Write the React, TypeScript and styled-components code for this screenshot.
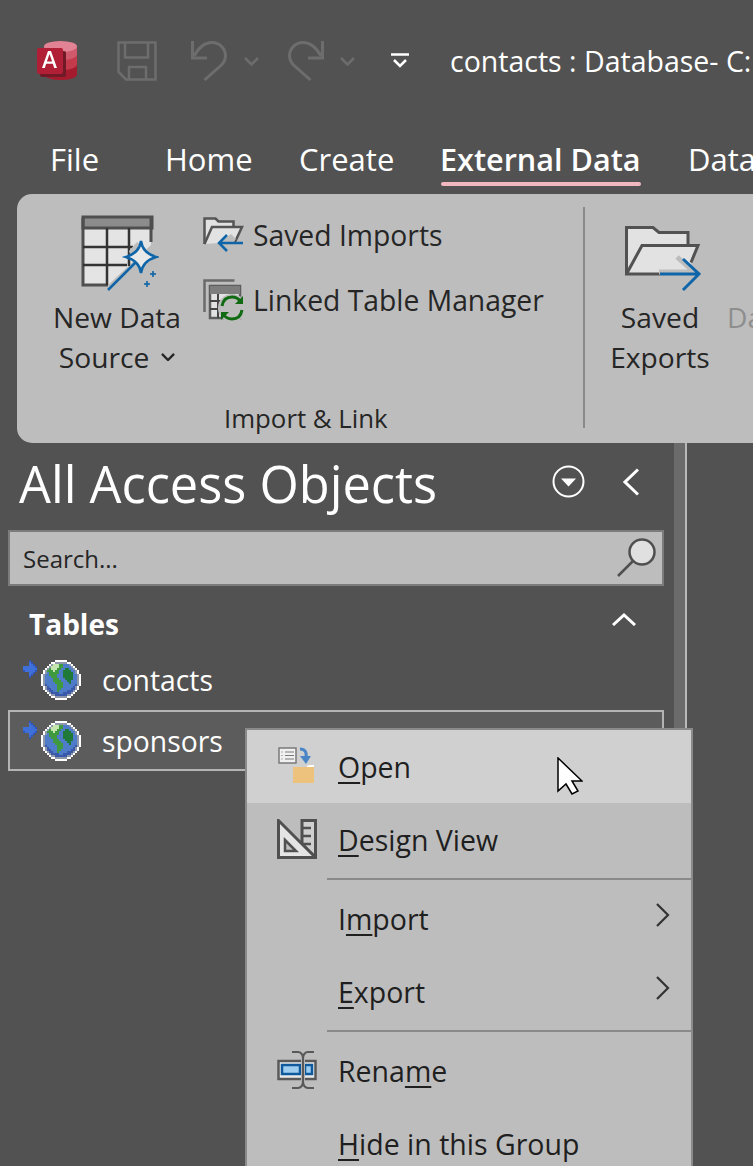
import React from 'react'
import styled, { createGlobalStyle } from 'styled-components'

const GlobalStyle = createGlobalStyle`
  *, *::before, *::after {
    box-sizing: border-box;
  }
  html, body {
    background: #525252;
    margin: 0;
    padding: 0;
  }
  body {
    font-family: 'Open Sans', 'Noto Sans', 'Liberation Sans', sans-serif;
  }
`

const Window = styled.div`
  background: #525252;
  display: flex;
  flex-direction: column;
  height: 1166px;
  overflow: hidden;
  position: relative;
  width: 753px;
`

const TitleBar = styled.div`
  align-items: center;
  display: flex;
  flex-shrink: 0;
  height: 122px;
  padding-left: 36px;
  white-space: nowrap;
`

const QuickIcon = styled.span<{ $gap: number }>`
  display: flex;
  flex-shrink: 0;
  margin-left: ${({ $gap }) => $gap}px;
`

const TitleText = styled.span`
  color: #fff;
  font-size: 28.5px;
  margin-left: 41px;
`

const TabBar = styled.div`
  display: flex;
  flex-shrink: 0;
  height: 72px;
  padding-left: 50px;
`

const Tab = styled.div<{ $width: number; $active?: boolean }>`
  color: #fff;
  flex-shrink: 0;
  font-size: ${({ $active }) => ($active ? 30.6 : 31)}px;
  font-weight: ${({ $active }) => ($active ? 600 : 400)};
  height: 64px;
  line-height: 38px;
  padding-top: 18px;
  position: relative;
  white-space: nowrap;
  width: ${({ $width }) => $width}px;
`

const TabLine = styled.span`
  background: #f2b8c0;
  border-radius: 2px;
  bottom: 0;
  height: 4px;
  left: 1px;
  position: absolute;
  width: 200px;
`

const Ribbon = styled.div`
  background: #bdbdbd;
  border-radius: 15px 0 0 15px;
  color: #262626;
  display: flex;
  flex-shrink: 0;
  height: 249px;
  margin-left: 17px;
  width: 770px;
`

const Group = styled.div`
  display: flex;
  flex-direction: column;
  flex-shrink: 0;
  height: 100%;
  width: 566px;
`

const GroupBody = styled.div`
  display: flex;
  flex: 1;
  padding: 21px 0 0 24px;
`

const BigButton = styled.div<{ $width: number }>`
  align-items: center;
  display: flex;
  flex-direction: column;
  flex-shrink: 0;
  font-size: 28.2px;
  line-height: 40px;
  white-space: nowrap;
  width: ${({ $width }) => $width}px;
`

const BigIcon = styled.div<{ $top?: number; $left: number }>`
  display: flex;
  height: 82px;
  justify-content: center;
  padding-left: ${({ $left }) => $left}px;
  padding-top: ${({ $top }) => $top ?? 0}px;
  width: 100%;
`

const ButtonLine = styled.span`
  align-items: center;
  display: flex;
  gap: 12px;
`

const SmallList = styled.div`
  display: flex;
  flex-direction: column;
  gap: 25px;
  padding-left: 10px;
`

const SmallItem = styled.div`
  align-items: center;
  display: flex;
  font-size: 28.3px;
  gap: 8px;
  height: 40px;
  white-space: nowrap;
`

const GroupLabel = styled.div`
  font-size: 25.8px;
  height: 48px;
  line-height: 46px;
  padding-left: 207px;
  white-space: nowrap;
`

const GroupRule = styled.div`
  align-self: center;
  background: #8a8a8a;
  flex-shrink: 0;
  height: 221px;
  margin-top: -2px;
  width: 2px;
`

const SecondGroup = styled.div`
  display: flex;
  padding: 21px 0 0 10px;
`

const DisabledLabel = styled.div`
  color: #8e8e8e;
  font-size: 28.2px;
  line-height: 40px;
  margin-top: 82px;
  padding-left: 2px;
`

const Body = styled.div`
  display: flex;
  flex: 1;
  min-height: 0;
`

const NavPane = styled.div`
  flex-shrink: 0;
  padding-left: 8px;
  width: 674px;
`

const NavHeader = styled.div`
  align-items: center;
  color: #fff;
  display: flex;
  height: 87px;
  padding: 0 35px 6px 11px;
`

const NavTitle = styled.div`
  flex: 1;
  font-size: 50.5px;
  white-space: nowrap;
`

const NavControls = styled.div`
  align-items: center;
  display: flex;
  gap: 38px;
  margin-bottom: 4px;
`

const SearchBox = styled.div`
  align-items: center;
  background: #bdbdbd;
  border: 2px solid #7c7c7c;
  color: #262626;
  display: flex;
  font-size: 24px;
  height: 56px;
  justify-content: space-between;
  padding: 0 6px 0 13px;
  width: 656px;
`

const SectionHeader = styled.div`
  align-items: center;
  color: #fff;
  display: flex;
  font-size: 28px;
  font-weight: 700;
  height: 63px;
  justify-content: space-between;
  padding: 13px 28px 0 21px;
  width: 656px;
`

const ObjectRow = styled.div<{ $selected?: boolean }>`
  align-items: center;
  background: ${({ $selected }) => ($selected ? '#5c5c5c' : 'transparent')};
  border: 2px solid ${({ $selected }) => ($selected ? '#b4b4b4' : 'transparent')};
  color: #fff;
  display: flex;
  font-size: 28.3px;
  gap: 21px;
  height: 61px;
  padding-left: 13px;
  width: 656px;
`

const ScrollStrip = styled.div`
  background: #6b6b6b;
  border-right: 2px solid #b8b8b8;
  flex-shrink: 0;
  width: 13px;
`

const Menu = styled.div`
  background: #bdbdbd;
  border-left: 2px solid #8a8a8a;
  border-right: 2px solid #8a8a8a;
  border-top: 2px solid #8a8a8a;
  color: #1f1f1f;
  display: flex;
  flex-direction: column;
  left: 245px;
  position: absolute;
  top: 728px;
  width: 448px;
`

const MenuRow = styled.div<{ $hover?: boolean }>`
  align-items: center;
  background: ${({ $hover }) => ($hover ? '#d0d0d0' : 'transparent')};
  display: flex;
  flex-shrink: 0;
  font-size: 28.5px;
  height: 73px;
  padding-right: 21px;
  white-space: nowrap;
`

const MenuIcon = styled.span`
  display: flex;
  flex-shrink: 0;
  justify-content: center;
  margin-top: -2px;
  padding-left: 9px;
  width: 91px;
`

const MenuLabel = styled.span`
  flex: 1;
`

const SubmenuArrow = styled.svg`
  margin-top: -8px;
`

const Key = styled.span`
  text-decoration: underline;
  text-decoration-thickness: 2px;
  text-underline-offset: 4px;
`

const MenuSeparator = styled.div`
  align-items: center;
  display: flex;
  flex-shrink: 0;
  height: 6px;
  padding-left: 80px;

  &::after {
    background: #8a8a8a;
    content: '';
    display: block;
    height: 2px;
    width: 100%;
  }
`

const Cursor = styled.svg`
  left: 557px;
  position: absolute;
  top: 757px;
`

const TableChevron = styled.svg`
  margin-top: -10px;
`

const PIXEL_COLORS: Record<string, string> = {
  W: '#ffffff',
  n: '#8f97ab',
  B: '#4f7cc9',
  D: '#3958a8',
  G: '#3f9a3f',
  L: '#c4e6ae',
  K: '#1f7a3a',
  A: '#3f6fd8',
  E: '#2f55b8',
}

const GLOBE = [
  '.......WWWWWW.......',
  '.....WWnnnnnnWW.....',
  '....WnLLLGGBBBnW....',
  '...WnLLLLGGBBBBnW...',
  '..WnGLLLGGBBKKBBnW..',
  '.WnGGGLGGBBKKKKBBnW.',
  '.WnBGGGGGBBKKKKKBnW.',
  'WnBBGGGGBBBKKKKKBBnW',
  'WnBBBGGGBBBKKKKKBBnW',
  'WnBBBBGGGBBBKKKKBBnW',
  'WnBBBBGGGGBBBKKBBBnW',
  'WnBBBBBGGGGBBBKBBBnW',
  'WnDBBBBBGGGBBBBBBDnW',
  '.WnDBBBBGGGBBBBBDnW.',
  '.WnDDBBBGGBBBBBDDnW.',
  '..WnDDBBGBBBBDDDnW..',
  '...WnDDDDBBDDDDnW...',
  '....WnnDDDDDDnnW....',
  '.....WWnnnnnnWW.....',
  '.......WWWWWW.......',
]

const LINK_ARROW = [
  '...E...',
  '...AE..',
  '...AAE.',
  'AAAAAAE',
  'AAAAAAA',
  'EAAAAAE',
  '...AAE.',
  '...AE..',
  '...E...',
]

const PixelArt: React.FC<{ rows: string[]; x: number; y: number }> = ({ rows, x, y }) => (
  <g shapeRendering="crispEdges">
    {rows.flatMap((row, r) =>
      row.split('').map((c, i) =>
        c === '.' ? null : (
          <rect key={`${r}-${i}`} x={x + i * 2} y={y + r * 2} width="2" height="2" fill={PIXEL_COLORS[c]} />
        ),
      ),
    )}
  </g>
)

const LinkedGlobe = () => (
  <svg width="58" height="40" viewBox="0 0 58 40">
    <PixelArt rows={LINK_ARROW} x={0} y={0} />
    <PixelArt rows={GLOBE} x={18} y={0} />
  </svg>
)

const AccessLogo = () => (
  <svg width="42" height="42" viewBox="0 0 42 42">
    <path d="M8 6h33v28c0 4-8 6-16 6s-17-2-17-6z" fill="#a41b2e" />
    <path d="M8 6h33v18c0 4-8 6-16 6S8 28 8 24z" fill="#c23a4c" />
    <path d="M8 6h33v8c0 4-8 6-16 6S8 18 8 14z" fill="#d05a6c" />
    <ellipse cx="24.500" cy="6.500" rx="16.500" ry="5.500" fill="#e28395" />
    <rect x="4" y="11" width="26" height="26" rx="2" fill="#6f1a26" />
    <rect x="1" y="8" width="26" height="26" rx="2" fill="#b01f35" />
    <path d="M6 28l6-17h3l6 17h-2.800l-1.400-4.200h-6.600L8.800 28zm4.900-6.400h5.200L13.500 14z" fill="#fff" />
  </svg>
)

const SaveIcon = () => (
  <svg width="40" height="40" viewBox="0 0 40 40" fill="none" stroke="#6d6d6d" strokeWidth="2.500">
    <path d="M1.500 1.500h37v37H9l-7.500-7.500z" />
    <path d="M8 1.500v15h23v-15M12 38.500V26h17v12.500" />
  </svg>
)

const TurnArrow: React.FC<{ flip?: boolean }> = ({ flip }) => (
  <svg width="36" height="40" viewBox="0 0 36 40" fill="none" stroke="#6d6d6d" strokeWidth="3">
    <g transform={flip ? 'translate(36 0) scale(-1 1)' : undefined}>
      <path d="M1.500 0V17H16" />
      <path d="M3 15C8 6 15 1.500 21 1.500c8 0 13.500 6.500 13.500 13.500 0 4-1.500 6-3.500 8.500L13.500 39" />
    </g>
  </svg>
)

const SmallChevron: React.FC<{ color?: string; size?: number }> = ({ color = '#6d6d6d', size = 15 }) => (
  <svg width={size} height={(size * 9) / 15} viewBox="0 0 15 9" fill="none" stroke={color} strokeWidth="2.500">
    <path d="M1 1l6.500 6.500L14 1" />
  </svg>
)

const CustomizeIcon = () => (
  <svg width="18" height="16" viewBox="0 0 18 16" fill="none" stroke="#fff" strokeWidth="2.500">
    <path d="M0 1.500h18" />
    <path d="M3 7l6 6 6-6" />
  </svg>
)

const NewDataIcon = () => (
  <svg width="78" height="78" viewBox="0 0 78 78">
    <path d="M2 3.500H70V30L27 70H2z" fill="#e4e4e4" />
    <rect x="2" y="2" width="69" height="11" fill="#8c8c8c" stroke="#4f4f4f" strokeWidth="3" />
    <path d="M2 3v67h25M70 3v24" fill="none" stroke="#4f4f4f" strokeWidth="3" />
    <path d="M26 13v57M48 13v38M2 32h50M2 50h44" stroke="#333" strokeWidth="2.500" fill="none" />
    <path d="M28 72l24-24-4-12 8-9 20 18-30 18-14 11z" fill="#bdbdbd" />
    <path d="M27 75l31-31" stroke="#0f65a8" strokeWidth="2.500" fill="none" />
    <path d="M60 26c1 8 5 13 15 16-10 3-14 8-15 16-1-8-5-13-15-16 10-3 14-8 15-16z" fill="#e9e9e9" stroke="#0f65a8" strokeWidth="2.500" />
    <path d="M72 56c0 2 1 3 3 3-2 0-3 1-3 3 0-2-1-3-3-3 2 0 3-1 3-3zM66 66c0 2 1 3 3 3-2 0-3 1-3 3 0-2-1-3-3-3 2 0 3-1 3-3z" fill="#0f65a8" stroke="#0f65a8" />
  </svg>
)

const SavedImportsIcon = () => (
  <svg width="42" height="36" viewBox="0 0 42 36">
    <path d="M1.500 27V1.500h11l3 3h15v5" fill="#e2e2e2" stroke="#555" strokeWidth="2.500" />
    <path d="M1.500 27L9 10h30l-7 15" fill="#e2e2e2" stroke="#555" strokeWidth="2.500" />
    <path d="M16 26l12-9 5 5-6 7z" fill="#bdbdbd" />
    <path d="M40 26H16M24 18l-8 8 8 8" fill="none" stroke="#0f65a8" strokeWidth="2.500" />
  </svg>
)

const LinkedTableIcon = () => (
  <svg width="42" height="42" viewBox="0 0 42 42">
    <path d="M1.500 33V1.500h30" fill="none" stroke="#6a6a6a" strokeWidth="2.500" />
    <rect x="7" y="7" width="30" height="32" fill="#e2e2e2" stroke="#5d5d5d" strokeWidth="2.500" />
    <rect x="7" y="7" width="30" height="8" fill="#7d7d7d" />
    <path d="M7 22h16M7 30h16M15 15v24" stroke="#444" strokeWidth="2" />
    <circle cx="29" cy="29" r="14" fill="#bdbdbd" />
    <path d="M19 27c1-6 5-9 10-9 4 0 7 2 9 5M39 31c-1 6-5 9-10 9-4 0-7-2-9-5" fill="none" stroke="#0f6a12" strokeWidth="3" />
    <path d="M40 17v8h-8zM18 41v-8h8z" fill="#0f6a12" />
  </svg>
)

const SavedExportsIcon = () => (
  <svg width="76" height="66" viewBox="0 0 76 66">
    <path d="M1.500 48V1.500H28l6 5h29V20" fill="#e2e2e2" stroke="#525252" strokeWidth="3" />
    <path d="M1.500 48L17 19.500h56L62 48z" fill="#e2e2e2" />
    <path d="M35 48H1.500L17 19.500h56l-7 17" fill="none" stroke="#525252" strokeWidth="3" />
    <path d="M52 31l17 15H34" fill="none" stroke="#bdbdbd" strokeWidth="5" />
    <path d="M35 48h39M58 33l16 15-16 16" fill="none" stroke="#0f65a8" strokeWidth="3" />
  </svg>
)

const PaneMenuIcon = () => (
  <svg width="33" height="33" viewBox="0 0 33 33">
    <circle cx="16.500" cy="16.500" r="15" fill="none" stroke="#fff" strokeWidth="2" />
    <path d="M9 13.500h15l-7.500 8z" fill="#fff" />
  </svg>
)

const CollapseIcon = () => (
  <svg width="16" height="28" viewBox="0 0 16 28" fill="none" stroke="#fff" strokeWidth="3">
    <path d="M15 1.500L2 14l13 12.500" />
  </svg>
)

const SearchIcon = () => (
  <svg width="40" height="40" viewBox="0 0 40 40">
    <circle cx="26" cy="14" r="12.500" fill="#e0e0e0" stroke="#4f4f4f" strokeWidth="2.500" />
    <path d="M17 23L2 38" stroke="#4f4f4f" strokeWidth="2.500" />
  </svg>
)

const OpenIcon = () => (
  <svg width="38" height="38" viewBox="0 0 38 38">
    <rect x="1" y="1" width="17" height="15" fill="#f0f0f0" stroke="#7a7a7a" strokeWidth="1.500" />
    <path d="M7 5h9M7 8.500h9M7 12h9M3.500 5h1M3.500 8.500h1M3.500 12h1" stroke="#7a7a7a" strokeWidth="1" />
    <path d="M22 2c5 0 7 3 6 9" fill="none" stroke="#4a86c5" strokeWidth="3" />
    <path d="M22 9l6 8 5-8z" fill="#4a86c5" />
    <path d="M15 20h14l3-2h4v18H15z" fill="#ecc27c" />
    <path d="M29 19l2-1h5v2h-7z" fill="#fff" />
  </svg>
)

const DesignIcon = () => (
  <svg width="40" height="40" viewBox="0 0 40 40">
    <path d="M25 1.500h13.500v37L25 25z" fill="#cfcfcf" stroke="#505050" strokeWidth="3" />
    <path d="M1.500 1.500l37 37h-37z" fill="#e4e4e4" stroke="#505050" strokeWidth="3" />
    <path d="M26 9h8M26 17h8M26 25h8" stroke="#505050" strokeWidth="2.500" />
    <path d="M8 21l11 11H8z" fill="#bdbdbd" stroke="#505050" strokeWidth="2.500" />
  </svg>
)

const RenameIcon = () => (
  <svg width="40" height="40" viewBox="0 0 40 40">
    <rect x="1.500" y="11" width="37" height="18" fill="#eaeaea" stroke="#595959" strokeWidth="2.500" />
    <rect x="5" y="15" width="18" height="9" fill="#9fcdf0" stroke="#0f5a9c" strokeWidth="2.500" />
    <rect x="28" y="15" width="7" height="9" fill="#9fcdf0" stroke="#0f5a9c" strokeWidth="2.500" />
    <rect x="24" y="8" width="4" height="26" fill="#bdbdbd" />
    <path d="M15 2h6c3 0 5 3 5 6v24c0 3-2 6-5 6h-6M37 2h-6c-3 0-5 3-5 6v24c0 3 2 6 5 6h6" fill="none" stroke="#595959" strokeWidth="2.200" />
  </svg>
)

const App: React.FC = () => (
  <>
    <GlobalStyle />
    <Window>
      <TitleBar>
        <AccessLogo />
        <QuickIcon $gap={39}><SaveIcon /></QuickIcon>
        <QuickIcon $gap={34}><TurnArrow /></QuickIcon>
        <QuickIcon $gap={17}><SmallChevron /></QuickIcon>
        <QuickIcon $gap={29}><TurnArrow flip /></QuickIcon>
        <QuickIcon $gap={16}><SmallChevron /></QuickIcon>
        <QuickIcon $gap={36}><CustomizeIcon /></QuickIcon>
        <TitleText>contacts : Database- C:</TitleText>
      </TitleBar>
      <TabBar>
        <Tab $width={115}>File</Tab>
        <Tab $width={134}>Home</Tab>
        <Tab $width={141}>Create</Tab>
        <Tab $width={248} $active>External Data<TabLine /></Tab>
        <Tab $width={100}>Database</Tab>
      </TabBar>
      <Ribbon>
        <Group>
          <GroupBody>
            <BigButton $width={152}>
              <BigIcon $left={6}><NewDataIcon /></BigIcon>
              <span>New Data</span>
              <ButtonLine>Source <SmallChevron color="#262626" size={14} /></ButtonLine>
            </BigButton>
            <SmallList>
              <SmallItem><SavedImportsIcon />Saved Imports</SmallItem>
              <SmallItem><LinkedTableIcon />Linked Table Manager</SmallItem>
            </SmallList>
          </GroupBody>
          <GroupLabel>Import &amp; Link</GroupLabel>
        </Group>
        <GroupRule />
        <SecondGroup>
          <BigButton $width={130}>
            <BigIcon $top={11} $left={5}><SavedExportsIcon /></BigIcon>
            <span>Saved</span>
            <span>Exports</span>
          </BigButton>
          <DisabledLabel>Data</DisabledLabel>
        </SecondGroup>
      </Ribbon>
      <Body>
        <NavPane>
          <NavHeader>
            <NavTitle>All Access Objects</NavTitle>
            <NavControls>
              <PaneMenuIcon />
              <CollapseIcon />
            </NavControls>
          </NavHeader>
          <SearchBox>Search...<SearchIcon /></SearchBox>
          <SectionHeader>
            Tables
            <TableChevron width="24" height="13" viewBox="0 0 24 13" fill="none" stroke="#fff" strokeWidth="3">
              <path d="M1 12L12 2l11 10" />
            </TableChevron>
          </SectionHeader>
          <ObjectRow><LinkedGlobe />contacts</ObjectRow>
          <ObjectRow $selected><LinkedGlobe />sponsors</ObjectRow>
        </NavPane>
        <ScrollStrip />
      </Body>
      <Menu>
        <MenuRow $hover><MenuIcon><OpenIcon /></MenuIcon><MenuLabel><Key>O</Key>pen</MenuLabel></MenuRow>
        <MenuRow><MenuIcon><DesignIcon /></MenuIcon><MenuLabel><Key>D</Key>esign View</MenuLabel></MenuRow>
        <MenuSeparator />
        <MenuRow>
          <MenuIcon />
          <MenuLabel>I<Key>m</Key>port</MenuLabel>
          <SubmenuArrow width="15" height="24" viewBox="0 0 15 24" fill="none" stroke="#333" strokeWidth="2.200">
            <path d="M2 1l11 11L2 23" />
          </SubmenuArrow>
        </MenuRow>
        <MenuRow>
          <MenuIcon />
          <MenuLabel><Key>E</Key>xport</MenuLabel>
          <SubmenuArrow width="15" height="24" viewBox="0 0 15 24" fill="none" stroke="#333" strokeWidth="2.200">
            <path d="M2 1l11 11L2 23" />
          </SubmenuArrow>
        </MenuRow>
        <MenuSeparator />
        <MenuRow><MenuIcon><RenameIcon /></MenuIcon><MenuLabel>Rena<Key>m</Key>e</MenuLabel></MenuRow>
        <MenuRow><MenuIcon /><MenuLabel><Key>H</Key>ide in this Group</MenuLabel></MenuRow>
      </Menu>
      <Cursor width="26" height="38" viewBox="0 0 26 38">
        <path d="M1 1v33l8-7 6 10 6-3-6-10h10z" fill="#fff" stroke="#000" strokeWidth="1.500" />
      </Cursor>
    </Window>
  </>
)

export default App
